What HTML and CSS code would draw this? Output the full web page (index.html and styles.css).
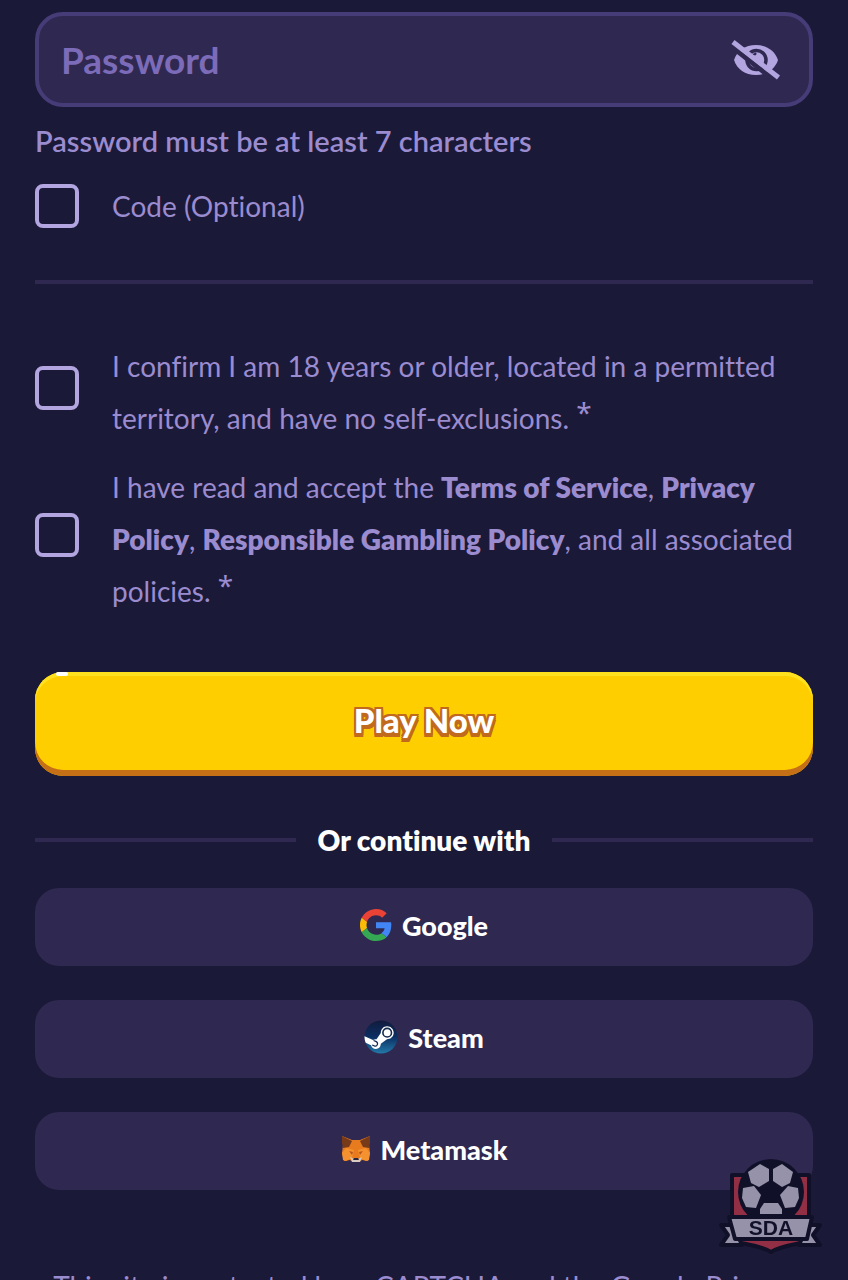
FILE: index.html
```html
<!DOCTYPE html>
<html lang="en">
<head>
<meta charset="utf-8">
<meta name="viewport" content="width=device-width, initial-scale=1">
<title>Create account</title>
<link rel="stylesheet" href="styles.css">
</head>
<body>
<main class="page">
<form class="signup">
  <div class="field">
    <input class="field-input" id="password" type="password" placeholder="Password" aria-label="Password" aria-describedby="password-hint">
    <button class="reveal" type="button" aria-label="Show password">
      <svg viewBox="0 0 50 42" width="50" height="42" aria-hidden="true">
        <path fill="#b3a5df" d="M3 21C6 12 14 6 25 6s19 6 22 15c-3 9-11 15-22 15S6 30 3 21z"/>
        <circle cx="25.500" cy="21" r="9.500" fill="none" stroke="#2f2850" stroke-width="3.500"/>
        <path fill="#2f2850" d="M21 16c1-1.500 2-2 4-2.500 1 1 .5 2.500-1 3z"/>
        <path d="M-2 5.500l43 34" stroke="#2f2850" stroke-width="5"/>
        <path d="M2 3l45.500 35.500" stroke="#b3a5df" stroke-width="5"/>
      </svg>
    </button>
  </div>
  <p class="hint" id="password-hint">Password must be at least 7 characters</p>

  <div class="option">
    <input class="check" type="checkbox" id="code">
    <label class="option-text" for="code">Code (Optional)</label>
  </div>
  <hr class="rule">
  <div class="agreements">
    <div class="option option-long">
      <input class="check" type="checkbox" id="age">
      <label class="option-text" for="age">I confirm I am 18 years or older, located in a permitted territory, and have no self-exclusions. <span class="required">*</span></label>
    </div>
    <div class="option option-long">
      <input class="check" type="checkbox" id="terms">
      <label class="option-text" for="terms">I have read and accept the <a href="#terms">Terms of Service</a>, <a href="#privacy">Privacy Policy</a>, <a href="#gambling">Responsible Gambling Policy</a>, and all associated policies. <span class="required">*</span></label>
    </div>
  </div>
  <button class="play" type="submit">Play Now</button>
</form>

<div class="separator">Or continue with</div>

<div class="providers">
  <button class="provider" type="button">
    <svg viewBox="0 0 48 48" width="32" height="32" aria-hidden="true">
      <path fill="#ea4335" d="M24 9.500c3.540 0 6.710 1.220 9.210 3.600l6.850-6.850C35.900 2.380 30.470 0 24 0 14.620 0 6.510 5.380 2.560 13.220l7.980 6.190C12.430 13.720 17.740 9.500 24 9.500z"/>
      <path fill="#4285f4" d="M46.980 24.550c0-1.570-.15-3.090-.38-4.550H24v9.020h12.940c-.58 2.960-2.260 5.480-4.780 7.180l7.730 6c4.510-4.180 7.090-10.360 7.090-17.650z"/>
      <path fill="#fbbc05" d="M10.530 28.590c-.48-1.450-.76-2.990-.76-4.590s.27-3.140.76-4.590l-7.980-6.190C.92 16.460 0 20.120 0 24s.92 7.540 2.560 10.780l7.970-6.190z"/>
      <path fill="#34a853" d="M24 48c6.480 0 11.930-2.130 15.890-5.810l-7.730-6c-2.150 1.450-4.920 2.300-8.160 2.300-6.260 0-11.570-4.220-13.470-9.910l-7.980 6.190C6.510 42.620 14.620 48 24 48z"/>
    </svg>
    Google
  </button>
  <button class="provider" type="button">
    <svg viewBox="0 0 34 34" width="34" height="34" aria-hidden="true">
      <defs>
        <linearGradient id="steam-bg" x1="0" y1="0" x2="0" y2="1">
          <stop offset="0" stop-color="#111b3c"/>
          <stop offset=".5" stop-color="#0b2f63"/>
          <stop offset="1" stop-color="#2379a8"/>
        </linearGradient>
        <clipPath id="steam-clip"><circle cx="17" cy="17" r="16.500"/></clipPath>
      </defs>
      <circle cx="17" cy="17" r="16.500" fill="url(#steam-bg)"/>
      <g clip-path="url(#steam-clip)">
        <path fill="#fff" d="M0 16l9 4c1-.6 2-.8 3.500-.8l4.300-6.200c0-4 2.700-6.800 6.300-6.800s6.600 2.900 6.600 6.500-3 6.500-6.700 6.500l-6.200 4.500c0 3-2 5.200-4.900 5.200-2.500 0-4.200-1.500-4.900-3.700L0 22z"/>
      </g>
      <circle cx="23.200" cy="12.700" r="4.300" fill="#fff" stroke="#14294f" stroke-width="1.600"/>
      <path fill="none" stroke="#14294f" stroke-width="1.200" d="M9.500 20.500l2.300.9c3.200 1.600 1.500 5.500-1.500 4.500l-2.100-.9"/>
    </svg>
    Steam
  </button>
  <button class="provider" type="button">
    <svg viewBox="0 0 30 28" width="30" height="28" aria-hidden="true">
      <path fill="#e87b1e" d="M1 1l10 4h8l10-4-1 9 1 8-2 8-6-1-3 2h-6l-3-2-6 1-2-8 1-8z"/>
      <path fill="#773b1a" d="M1 1l10 5-3 6-6 1-1-6zM29 1L19 6l3 6 6 1 1-6z"/>
      <path fill="#f59230" d="M1 18l4-5 8 2-2 8-6 3-3-1zM29 18l-4-5-8 2 2 8 6 3 3-1z"/>
      <path fill="#b95618" d="M8 16l4 1-1 3zM22 16l-4 1 1 3z"/>
      <path fill="#d8cbc1" d="M9 22l4 2h4l4-2-2 5h-8z"/>
      <path fill="#29273b" d="M13 23h4l1 2h-6z"/>
    </svg>
    Metamask
  </button>
</div>

<footer class="legal">This site is protected by reCAPTCHA and the Google Privacy Policy and Terms of Service apply.</footer>
</main>

<svg class="badge" viewBox="0 0 104 96" role="img" aria-label="SDA">
  <path fill="#932f45" stroke="#111029" stroke-width="4" stroke-linejoin="round" d="M14 17h77v62l-8 6c-10 2-22 4-30 9-8-5-20-7-30-9l-9-6z"/>
  <circle cx="53" cy="34" r="33" fill="#111029"/>
  <g fill="#9592aa">
    <path d="M30 14l12-8 9 5v12l-10 6-8-4z"/>
    <path d="M55 11l9-5 11 8-3 11-8 4-9-6z"/>
    <path d="M25 30l11-2 7 9-5 13-10-1-4-9z"/>
    <path d="M70 28l10 2 1 10-4 9-10 1-5-13z"/>
    <path d="M46 45h14l4 6v5H42v-5z"/>
  </g>
  <path fill="#9592aa" stroke="#111029" stroke-width="4" stroke-linejoin="round" d="M3 67h12l9 20H3l7-10zM102 67H90l-9 20h21l-7-10z"/>
  <path fill="#9592aa" stroke="#111029" stroke-width="4" stroke-linejoin="round" d="M11 59h83l-5 22H17z"/>
  <text class="badge-text" x="53" y="77" text-anchor="middle">SDA</text>
</svg>
</body>
</html>
```
FILE: styles.css
```css
* {
  box-sizing: border-box;
}

body {
  margin: 0;
  background: #1a1938;
  color: #9b8bcf;
  font-family: Lato, "Noto Sans", sans-serif;
  font-size: 28px;
  font-variant-ligatures: none;
}

button,
input {
  font: inherit;
}

.page {
  height: 100vh;
  overflow: hidden;
  padding: 12px 35px 0;
}

.field {
  display: flex;
  align-items: center;
  height: 95px;
  padding: 0 28px 0 22px;
  border: 4px solid #463c78;
  border-radius: 28px;
  background: #2f2850;
}

.field-input {
  flex: 1;
  min-width: 0;
  padding: 0;
  border: 0;
  outline: 0;
  background: none;
  color: #b3a5df;
  font-size: 37px;
  font-weight: 700;
}

.field-input::placeholder {
  color: #7c6bb8;
  opacity: 1;
}

.reveal {
  display: flex;
  padding: 0;
  border: 0;
  background: none;
  cursor: pointer;
}

.hint {
  margin: 16px 0 25px;
  font-size: 29px;
  font-weight: 600;
  line-height: 36px;
}

.option {
  display: flex;
  align-items: center;
  gap: 33px;
}

.check {
  flex: none;
  appearance: none;
  width: 44px;
  height: 44px;
  margin: 0;
  border: 4px solid #b3a5df;
  border-radius: 8px;
}

.check:checked {
  background: #b3a5df;
}

.option-text {
  line-height: 44px;
}

.option-long .check {
  margin-bottom: 8px;
}

.option-long .option-text {
  line-height: 52px;
}

.option-text a {
  color: inherit;
  font-weight: 800;
  text-decoration: none;
}

.required {
  font-family: "Noto Sans", sans-serif;
  line-height: 0;
  vertical-align: 6px;
}

.rule {
  height: 4px;
  margin: 52px 0 56px;
  border: 0;
  background: #2f2850;
}

.agreements {
  display: grid;
  gap: 17px;
}

.play {
  position: relative;
  display: block;
  width: 100%;
  height: 104px;
  margin-top: 55px;
  padding: 0 0 8px;
  border: 0;
  border-radius: 28px;
  background: #ffce00;
  box-shadow: inset 0 -6px #c56f16, inset 0 4px #ffe11f;
  color: #fff;
  font-size: 33px;
  font-weight: 900;
  text-shadow:
    2px 0 #c1691d, -2px 0 #c1691d, 0 -2px #c1691d,
    2px -2px #c1691d, -2px -2px #c1691d,
    2px 2px #c1691d, -2px 2px #c1691d,
    0 4px #c1691d, 2px 4px #c1691d, -2px 4px #c1691d;
  cursor: pointer;
}

.play::before {
  content: "";
  position: absolute;
  top: 0;
  left: 21px;
  width: 12px;
  height: 4px;
  border-radius: 2px;
  background: #fff;
}

.separator {
  display: grid;
  grid-template-columns: 1fr auto 1fr;
  align-items: center;
  gap: 22px;
  margin: 46px 0 30px;
  color: #fff;
  font-weight: 800;
  line-height: 36px;
}

.separator::before,
.separator::after {
  content: "";
  height: 4px;
  background: #2f2850;
}

.providers {
  display: grid;
  gap: 34px;
}

.provider {
  display: flex;
  align-items: center;
  justify-content: center;
  gap: 10px;
  height: 78px;
  padding: 0 0 4px;
  border: 0;
  border-radius: 24px;
  background: #2f2850;
  color: #fff;
  font-size: 27px;
  font-weight: 900;
  cursor: pointer;
}

.legal {
  margin-top: 76px;
  line-height: 40px;
  text-align: center;
}

.badge {
  position: fixed;
  right: 26px;
  bottom: 26px;
  width: 104px;
  height: 96px;
  overflow: visible;
}

.badge-text {
  fill: #111029;
  font-family: "Liberation Sans", sans-serif;
  font-size: 21px;
  font-weight: 700;
}
```
